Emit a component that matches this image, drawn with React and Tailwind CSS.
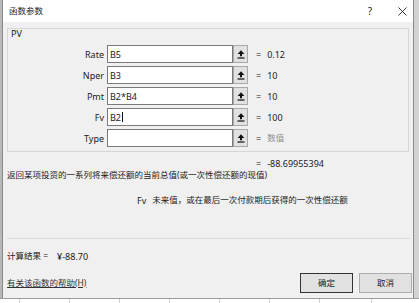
import React from "react";

const font = { fontFamily: '"Noto Sans", "Noto Sans CJK SC", sans-serif' };

function RefIcon() {
  return (
    <svg width="8" height="9" viewBox="0 0 8 9">
      <path d="M4 0.3 L7.4 4 H5 V6.2 H3 V4 H0.6 Z" fill="#111" />
      <rect x="0.5" y="7.4" width="7" height="1.2" fill="#111" />
    </svg>
  );
}

const rows = [
  { label: "Rate", value: "B5", result: "0.12" },
  { label: "Nper", value: "B3", result: "10" },
  { label: "Pmt", value: "B2*B4", result: "10" },
  { label: "Fv", value: "B2", result: "100", caret: true },
  { label: "Type", value: "", result: "数值", gray: true },
];

const gridX = [20, 70, 120, 170, 220, 270, 320, 372];

export default function App() {
  return (
    <div className="w-[419px] h-[303px] flex flex-col bg-white overflow-hidden text-[#1b1b1b]" style={font}>
      <div className="flex h-[298px]">
        <div className="w-[3px] h-full bg-[#b9b9b9] border-r border-[#8a8a8a]" />
        <div className="w-[411px] h-full flex flex-col bg-[#f0f0f0] border-r border-[#8c8c8c]">
          {/* title bar */}
          <div className="h-[22px] bg-white flex items-center pl-[6px] shrink-0">
            <span className="text-[8.5px] leading-none">函数参数</span>
            <span className="ml-auto text-[10px] leading-none w-[12px] text-center">?</span>
            <div className="w-[12px] ml-[20px] mr-[5px] flex justify-center">
              <svg width="9" height="9" viewBox="0 0 9 9">
                <path d="M0.5 0.5 L8.5 8.5 M8.5 0.5 L0.5 8.5" stroke="#222" strokeWidth="0.9" />
              </svg>
            </div>
          </div>

          <div className="flex flex-col pl-[4px] pr-[2px]">
            {/* group box */}
            <div className="mt-[6px] w-[402px] h-[124px] border border-[#d6d6d6] flex flex-col">
              <div className="h-[10px] leading-[10px] pl-[3px] text-[9px]">PV</div>
              <div className="mt-[6px] flex flex-col gap-[3px]">
                {rows.map((r) => (
                  <div key={r.label} className="h-[18px] flex items-center">
                    <div className="w-[96px] text-right text-[9px] leading-none">{r.label}</div>
                    <div className="ml-[3px] w-[126px] h-[18px] border border-[#7a7a7a] bg-white flex items-center pl-[2px] text-[9px] leading-none">
                      {r.value}
                      {r.caret && <span className="inline-block w-[1px] h-[10px] bg-[#111] ml-[1px]" />}
                    </div>
                    <div className="w-[15px] h-[18px] border border-[#a8a8a8] bg-[#e1e1e1] flex items-center justify-center">
                      <RefIcon />
                    </div>
                    <div className="ml-[8px] text-[9px] leading-none">=</div>
                    <div className={"ml-[6px] leading-none " + (r.gray ? "text-[8.5px] text-[#8f8f8f]" : "text-[9px]")}>
                      {r.result}
                    </div>
                  </div>
                ))}
              </div>
            </div>

            <div className="mt-[5px] h-[12px] flex items-center pl-[249px] text-[9px] leading-none">
              <span>=</span>
              <span className="ml-[6px]">-88.69955394</span>
            </div>
            <div className="h-[12px] flex items-center pl-[0px] text-[8.5px] leading-none">
              返回某项投资的一系列将来偿还额的当前总值(或一次性偿还额的现值)
            </div>
            <div className="mt-[13px] h-[12px] flex items-center pl-[130px] leading-none">
              <span className="text-[9px]">Fv</span>
              <span className="ml-[6px] text-[8.5px]">未来值，或在最后一次付款期后获得的一次性偿还额</span>
            </div>

            <div className="mt-[32px] w-[403px] border-t border-[#dadada]" />

            <div className="mt-[11px] h-[12px] flex items-center text-[8.5px] leading-none">
              <span>计算结果 =</span>
              <span className="ml-[9px] text-[9px]">¥-88.70</span>
            </div>

            <div className="mt-[11px] h-[20px] flex items-center">
              <span className="text-[8.5px] leading-none underline text-[#333]">有关该函数的帮助(H)</span>
              <div className="ml-auto flex gap-[6px] mr-[-1px]">
                <div className="w-[53px] h-[20px] border border-[#333] bg-[#e1e1e1] flex items-center justify-center text-[8.5px] leading-none">
                  确定
                </div>
                <div className="w-[53px] h-[20px] border border-[#adadad] bg-[#e1e1e1] flex items-center justify-center text-[8.5px] leading-none">
                  取消
                </div>
              </div>
            </div>
          </div>
        </div>
        <div className="flex-1 h-full bg-[#d2d2d2]" />
      </div>
      <div className="h-[5px] flex bg-white border-t border-[#9a9a9a]">
        {gridX.map((x, i) => (
          <div
            key={x}
            className="h-full border-r border-[#cfcfcf] shrink-0"
            style={{ width: i === 0 ? x : x - gridX[i - 1] }}
          />
        ))}
      </div>
    </div>
  );
}
